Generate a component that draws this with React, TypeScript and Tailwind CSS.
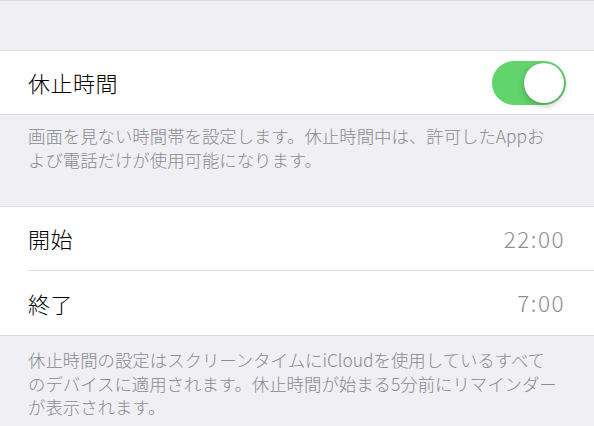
import { useState } from "react";

const font = { fontFamily: '"Noto Sans CJK JP", "Noto Sans", sans-serif' };

function Toggle({ on, onChange }: { on: boolean; onChange: () => void }) {
  return (
    <button
      onClick={onChange}
      className={`relative w-[74px] h-[44px] rounded-full transition-colors ${on ? "bg-[#62d46c]" : "bg-[#e5e5ea]"}`}
    >
      <span
        className={`absolute top-[2px] w-[40px] h-[40px] rounded-full bg-white shadow-[0_3px_6px_rgba(0,0,0,0.22),0_0_1px_rgba(0,0,0,0.15)] transition-all ${on ? "left-[32px]" : "left-[2px]"}`}
      />
    </button>
  );
}

export default function App() {
  const [downtime, setDowntime] = useState(true);

  return (
    <div className="min-h-screen w-full bg-[#efeff4] border-t border-[#dcdce0] font-light" style={font}>
      <div className="h-[49px]" />

      {/* 休止時間スイッチ */}
      <div className="bg-white border-y border-[#dcdce0]">
        <div className="h-[63px] flex items-center justify-between pl-[28px] pr-[28px]">
          <span className="text-[22px] text-black tracking-[0.5px]">休止時間</span>
          <Toggle on={downtime} onChange={() => setDowntime(!downtime)} />
        </div>
      </div>

      <p className="pt-[9px] pb-[35px] pl-[28px] pr-[28px] text-[17.4px] leading-[23.5px] text-[#8a8a8f]">
        画面を見ない時間帯を設定します。休止時間中は、許可したAppお
        <br />
        よび電話だけが使用可能になります。
      </p>

      <div className="bg-white border-y border-[#dcdce0]">
        <div className="h-[63px] flex items-center justify-between pl-[28px] pr-[29px]">
          <span className="text-[22px] text-black tracking-[0.5px]">開始</span>
          <span className="text-[22.5px] text-[#8e8e93] tracking-[1.5px]">22:00</span>
        </div>
        <div className="ml-[28px] h-px bg-[#dcdce0]" />
        <div className="h-[64px] flex items-center justify-between pl-[28px] pr-[29px]">
          <span className="text-[22px] text-black tracking-[0.5px]">終了</span>
          <span className="text-[22.5px] text-[#8e8e93] tracking-[1.5px]">7:00</span>
        </div>
      </div>

      <p className="pt-[12px] pl-[28px] pr-[28px] text-[17.4px] leading-[23.5px] text-[#8a8a8f]">
        休止時間の設定はスクリーンタイムにiCloudを使用しているすべて
        <br />
        のデバイスに適用されます。休止時間が始まる5分前にリマインダー
        <br />
        が表示されます。
      </p>
    </div>
  );
}
